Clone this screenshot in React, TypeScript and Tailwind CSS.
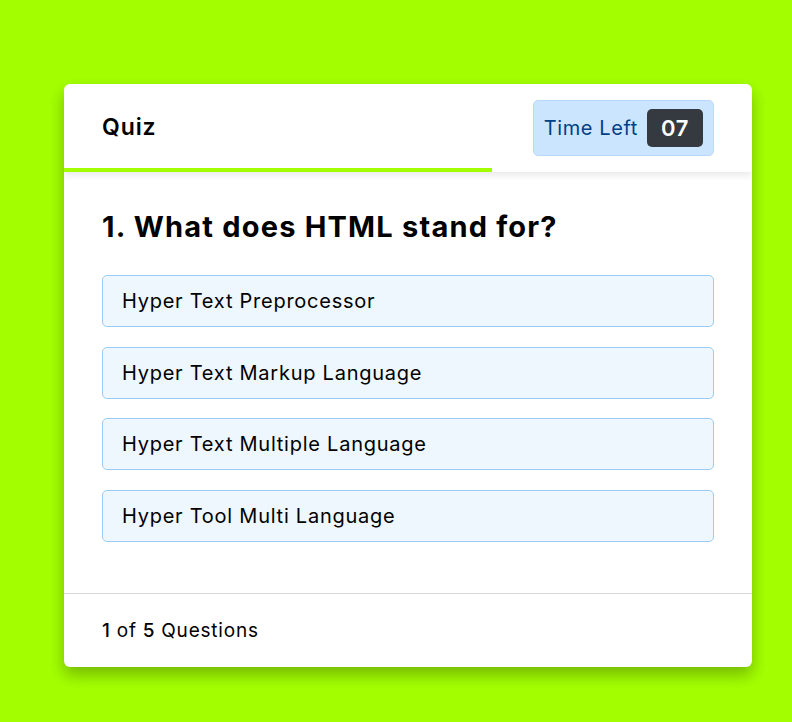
const options = [
  "Hyper Text Preprocessor",
  "Hyper Text Markup Language",
  "Hyper Text Multiple Language",
  "Hyper Tool Multi Language",
];

export default function App() {
  return (
    <div
      className="min-h-screen bg-[#a3ff00] pt-[84px] pl-[64px]"
      style={{ fontFamily: "Inter, 'Noto Sans', sans-serif" }}
    >
      <div className="w-[688px] overflow-hidden rounded-[6px] bg-white shadow-[0_8px_16px_rgba(0,0,0,0.28)]">
        <div className="relative z-10 shadow-[0_4px_6px_rgba(0,0,0,0.08)]">
          <div className="flex h-[84px] items-center justify-between px-[38px]">
            <h1 className="pt-[2px] text-[23px] font-semibold tracking-[0.9px] text-black">Quiz</h1>
            <div className="mt-[4px] flex h-[56px] items-center gap-[9px] rounded-[5px] border border-[#b8daff] bg-[#cce5ff] px-[10px]">
              <span className="text-[20px] tracking-[0.6px] text-[#004085]">Time Left</span>
              <span className="flex h-[38px] w-[56px] items-center justify-center rounded-[5px] bg-[#343a40] text-[22px] font-semibold tracking-[0.5px] text-white">
                07
              </span>
            </div>
          </div>
          <div className="h-[4px] w-[428px] bg-[#a3ff00]" />
        </div>

        <div className="px-[38px] pt-[34px] pb-[51px]">
          <h2 className="mb-[27px] text-[29px] font-bold leading-[42px] tracking-[1.2px] text-black">
            1. What does HTML stand for?
          </h2>
          <ul className="flex flex-col gap-[19.5px]">
            {options.map((o) => (
              <li
                key={o}
                className="flex h-[52px] items-center rounded-[5px] border border-[#9ccbf9] bg-[#eef6fe] px-[19px] text-[20px] tracking-[0.75px] text-black"
              >
                {o}
              </li>
            ))}
          </ul>
        </div>

        <div className="flex h-[74px] items-center border-t border-[#d6d6d6] px-[38px] pt-[3px] text-[19px] tracking-[0.8px] text-black">
          <span className="font-medium">1</span>
          <span className="mx-[6px]">of</span>
          <span className="font-medium">5</span>
          <span className="ml-[6px]">Questions</span>
        </div>
      </div>
    </div>
  );
}
